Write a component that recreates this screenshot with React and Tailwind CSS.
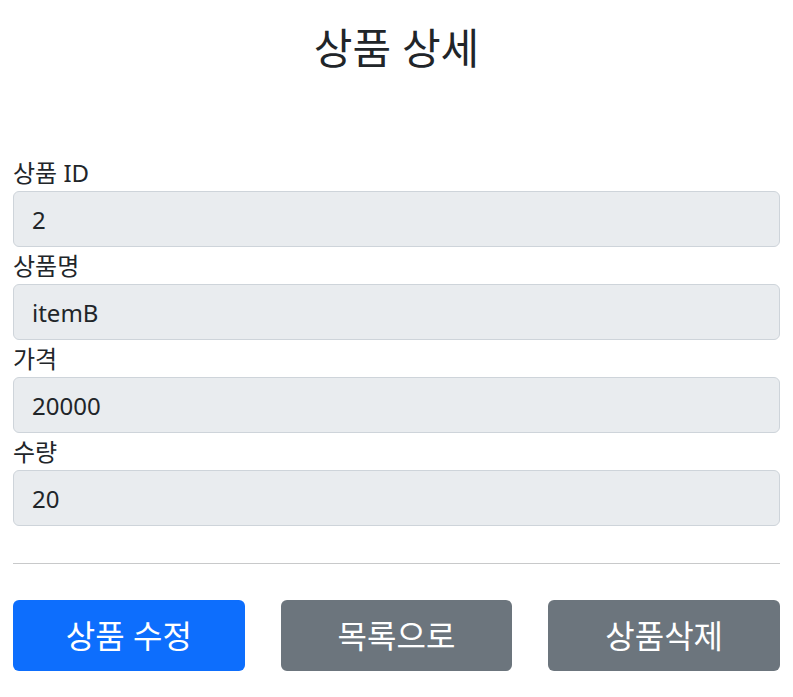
import React from "react";

const fields = [
  { label: "상품 ID", value: "2" },
  { label: "상품명", value: "itemB" },
  { label: "가격", value: "20000" },
  { label: "수량", value: "20" },
];

export default function App() {
  return (
    <div
      className="min-h-screen bg-white px-[13px] text-[#212529]"
      style={{ fontFamily: '"Noto Sans", "Noto Sans CJK KR", sans-serif' }}
    >
      {/* Header */}
      <div className="pt-[23px] pb-[81px] text-center">
        <h2 className="text-[42px] leading-[50px] font-normal">상품 상세</h2>
      </div>

      {/* Fields */}
      <div>
        {fields.map((f) => (
          <div key={f.label}>
            <label className="block h-[37px] text-[24px] leading-[37px]">{f.label}</label>
            <input
              readOnly
              value={f.value}
              className="block h-[56px] w-full rounded-[6px] border border-[#ced4da] bg-[#e9ecef] px-[18px] text-[24px] text-[#212529] outline-none"
            />
          </div>
        ))}
      </div>

      <hr className="mt-[37px] mb-[36px] border-t border-[#c8c9ca]" />

      {/* Actions */}
      <div className="grid grid-cols-3 gap-[36px]">
        <button className="h-[71px] rounded-[6px] bg-[#0d6efd] text-[32px] text-white">상품 수정</button>
        <button className="h-[71px] rounded-[6px] bg-[#6c757d] text-[32px] text-white">목록으로</button>
        <button className="h-[71px] rounded-[6px] bg-[#6c757d] text-[32px] text-white">상품삭제</button>
      </div>
    </div>
  );
}
